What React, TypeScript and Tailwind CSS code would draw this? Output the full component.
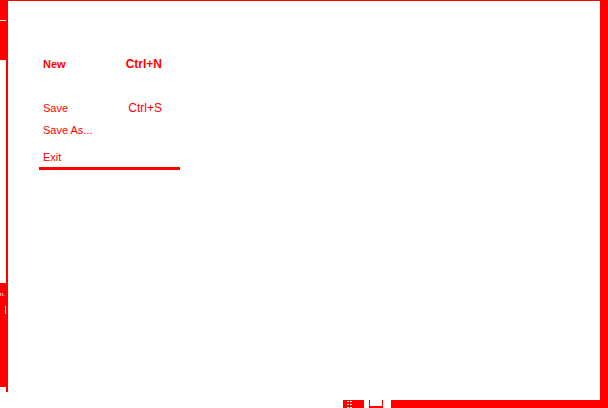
export default function App() {
  return (
    <div className="flex h-[408px] w-[608px] flex-col overflow-hidden bg-white font-['Liberation_Sans',Arial,sans-serif] text-[11px] text-[#ff0000]">
      {/* window body */}
      <div className="flex h-[400px]">
        {/* left gutter */}
        <div className="flex w-[6px] flex-col">
          <div className="h-[20px] bg-[#ff0000]" />
          <div className="h-[1px] bg-white" />
          <div className="h-[39px] bg-[#ff0000]" />
          <div className="h-[223px]" />
          <div className="relative h-[104px] overflow-hidden bg-[#ff0000] text-white">
            <span className="absolute left-0 top-[8px] text-[6px] leading-none">n.</span>
            <span className="absolute left-[5px] top-[23px] h-[8px] w-[1px] bg-white" />
          </div>
        </div>
        <div className="h-[392px] w-[2px] bg-[#ff0000]" />

        {/* main area with file menu */}
        <div className="flex-1 border-t border-[#ff0000]">
          <div className="ml-[31px] mt-[52px] flex w-[141px] flex-col">
            <div className="flex h-[22px] items-center justify-between pl-[4px] pr-[18px] font-bold">
              <span>New</span>
              <span className="text-[12px]">Ctrl+N</span>
            </div>
            <div className="h-[22px]" />
            <div className="flex h-[22px] items-center justify-between pl-[4px] pr-[18px]">
              <span>Save</span>
              <span className="text-[12px]">Ctrl+S</span>
            </div>
            <div className="flex h-[22px] items-center pl-[4px]">
              <span>Save As...</span>
            </div>
            <div className="h-[6px]" />
            <div className="flex h-[20px] items-center pl-[4px]">
              <span>Exit</span>
            </div>
            <div className="h-[3px] bg-[#ff0000]" />
          </div>
        </div>

        {/* right edge */}
        <div className="w-[8px] bg-[#ff0000]" />
      </div>

      {/* bottom strip */}
      <div className="flex h-[8px]">
        <div className="w-[343px]" />
        <div className="flex w-[21px] items-center bg-[#ff0000] pl-[4px]">
          <svg width="5" height="8" viewBox="0 0 5 8" fill="white">
            <rect x="0" y="1" width="2" height="1" />
            <rect x="3" y="1" width="2" height="1" />
            <rect x="0" y="4" width="2" height="1" />
            <rect x="3" y="4" width="2" height="1" />
            <rect x="0" y="7" width="2" height="1" />
            <rect x="3" y="7" width="2" height="1" />
          </svg>
        </div>
        <div className="w-[5px]" />
        <div className="h-[8px] w-[14px] border-x border-b-2 border-[#ff0000]" />
        <div className="w-[8px]" />
        <div className="flex-1 bg-[#ff0000]" />
      </div>
    </div>
  );
}
